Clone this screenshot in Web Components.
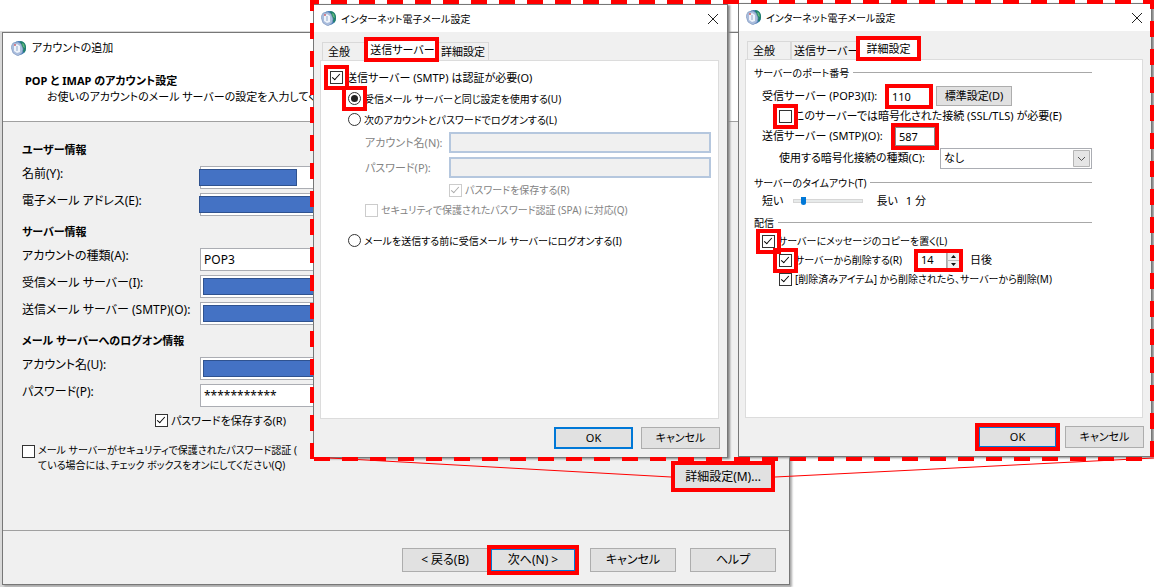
<!DOCTYPE html>
<html lang="ja">
<head>
<meta charset="utf-8">
<title>アカウントの追加</title>
<style>
  body {
    margin: 0;
    min-height: 100vh;
    background: #fff;
    color: #000;
    font: 12px/16px "Noto Sans", "Noto Sans CJK JP", sans-serif;
    font-feature-settings: "palt";
  }
</style>
</head>
<body>
<mail-desktop></mail-desktop>

<script>
class AppIcon extends HTMLElement {
  constructor () {
    super()
    this.attachShadow({ mode: 'open' }).innerHTML = /* html */`
      <style>
        :host { display: block; flex: none; width: 15px; height: 15px; }
        svg { display: block; width: 100%; height: 100%; }
      </style>
      <svg viewBox="0 0 15 15">
        <circle cx="8" cy="7" r="7" fill="#3e78b4"/>
        <path d="M9 0c4 0 6 3 6 7 0 2-1 4-2 5L10 6Z" fill="#1f7f6c"/>
        <path d="M11 2l2 1 1 4-2-1Z" fill="#5fb878"/>
        <path d="M0 6l2-4 5-1 3 2 2 5-1 4-4 3-5-3Z" fill="#a9bcdc" stroke="#7c96be" stroke-width=".6"/>
        <path d="M3 5l3-2 3 2v6l-3 1-3-2Z" fill="#eef3fb"/>
        <path d="M6 5v5" stroke="#91a9c9" fill="none"/>
        <circle cx="4" cy="4" r="1" fill="#d66b72"/>
      </svg>
    `
  }
}

class PushButton extends HTMLElement {
  constructor () {
    super()
    this.attachShadow({ mode: 'open' }).innerHTML = /* html */`
      <style>
        :host { display: block; flex: none; width: 79px; height: 22px; }
        button {
          display: block;
          width: 100%;
          height: 100%;
          padding: 0;
          border: 1px solid #adadad;
          background: #e1e1e1;
          color: inherit;
          font: inherit;
          font-feature-settings: inherit;
          white-space: nowrap;
        }
        :host([primary]) button { border: 2px solid #0078d7; }
        :host([mark]) button { outline: 4px solid #f00; outline-offset: -1px; }
      </style>
      <button type="button"><slot></slot></button>
    `
  }
}

class CheckOption extends HTMLElement {
  constructor () {
    super()
    this.attachShadow({ mode: 'open' })
  }

  connectedCallback () {
    const type = this.getAttribute('type') || 'checkbox'
    this.shadowRoot.innerHTML = /* html */`
      <style>
        :host { display: flex; align-items: center; gap: 3px; white-space: nowrap; }
        :host([multiline]) { align-items: flex-start; }
        :host([multiline]) span { margin-top: 2px; }
        :host([disabled]) { color: #838383; }
        span { position: relative; flex: none; width: 13px; height: 13px; }
        input {
          appearance: none;
          box-sizing: border-box;
          display: block;
          position: relative;
          width: 13px;
          height: 13px;
          margin: 0;
          border: 1px solid #333;
          background: #fff;
        }
        input[type=radio] { border-radius: 50%; }
        input:disabled { border-color: #ccc; color: #aaa; }
        input[type=checkbox]:checked::before {
          content: "";
          position: absolute;
          left: 3px;
          top: 0;
          width: 3px;
          height: 7px;
          border: solid currentColor;
          border-width: 0 1px 1px 0;
          transform: rotate(42deg);
        }
        input[type=radio]:checked::before {
          content: "";
          position: absolute;
          inset: 2px;
          border-radius: 50%;
          background: #222;
        }
        :host([mark]) span { z-index: 1; outline: 4px solid #f00; outline-offset: 2px; }
      </style>
      <span><input id="box" name="option" type="${type}"
        ${this.hasAttribute('checked') ? 'checked' : ''}
        ${this.hasAttribute('disabled') ? 'disabled' : ''}></span>
      <label for="box"><slot></slot></label>
    `
  }
}

/* Label and text box of the account form. "cover" is the bar hiding a private value. */
class FormField extends HTMLElement {
  constructor () {
    super()
    this.attachShadow({ mode: 'open' })
  }

  connectedCallback () {
    const cover = this.getAttribute('cover')
    this.shadowRoot.innerHTML = /* html */`
      <style>
        :host { display: flex; height: 27px; }
        label { flex: none; width: 178px; padding-top: 2px; white-space: nowrap; }
        div { position: relative; flex: 1; padding: 2px 0; }
        input {
          box-sizing: border-box;
          width: 100%;
          height: 23px;
          padding: 0 3px;
          border: 1px solid #abadb3;
          background: #fff;
          font: inherit;
        }
        span {
          position: absolute;
          box-sizing: border-box;
          left: 3px;
          top: 5px;
          right: 0;
          height: 17px;
          border: 1px solid #2f528f;
          background: #4472c4;
        }
        .short { left: -1px; right: auto; width: 98px; }
        .wide { left: -1px; }
      </style>
      <label for="box">${this.getAttribute('label')}</label>
      <div>
        <input id="box" type="text" value="${this.getAttribute('value') || ''}">
        ${cover !== null ? `<span class="${cover}"></span>` : ''}
      </div>
    `
  }
}

class OptionGroup extends HTMLElement {
  constructor () {
    super()
    this.attachShadow({ mode: 'open' })
  }

  connectedCallback () {
    this.shadowRoot.innerHTML = /* html */`
      <style>
        :host { display: block; }
        header { display: flex; align-items: center; gap: 4px; height: 16px; font-size: 10px; white-space: nowrap; }
        header::after { content: ""; flex: 1; height: 1px; margin-bottom: 2px; background: #a8a8a8; }
      </style>
      <header>${this.getAttribute('label')}</header>
      <slot></slot>
    `
  }
}

class SettingsDialog extends HTMLElement {
  constructor () {
    super()
    this.attachShadow({ mode: 'open' })
  }

  connectedCallback () {
    const active = Number(this.getAttribute('active'))
    const tabs = ['全般', '送信サーバー', '詳細設定'].map((name, i) =>
      `<button type="button" role="tab" aria-selected="${i === active}">${name}</button>`).join('')
    this.shadowRoot.innerHTML = /* html */`
      <style>
        :host {
          display: flex;
          flex-direction: column;
          box-sizing: border-box;
          border: 1px solid #777;
          background: #f0f0f0;
          box-shadow: 2px 1px 2px #888;
          font-size: 11px;
        }
        header {
          display: flex;
          align-items: center;
          gap: 5px;
          height: 27px;
          padding: 0 8px 0 7px;
          background: #fff;
        }
        h2 { flex: 1; margin: 0; font: inherit; font-size: 10px; }
        .close { width: 12px; height: 12px; padding: 0; border: 0; background: none; }
        .close svg { display: block; }
        nav { display: flex; align-items: flex-end; height: 28px; padding: 0 8px; }
        nav button {
          height: 18px;
          padding: 0;
          border: 1px solid #d9d9d9;
          border-bottom: 0;
          background: #f0f0f0;
          color: inherit;
          font: inherit;
          font-feature-settings: inherit;
          white-space: nowrap;
        }
        nav button:first-child { width: 44px; padding: 0 5px; text-align: left; }
        nav button:nth-child(2) { width: 67px; padding-left: 2px; }
        nav button:nth-child(3) { width: 52px; }
        nav button[aria-selected=true] {
          position: relative;
          z-index: 1;
          height: 21px;
          border: 0;
          background: #fff;
          outline: 4px solid #f00;
          outline-offset: -2px;
        }
        nav button:nth-child(2)[aria-selected=true] { width: 71px; }
        nav button:nth-child(3)[aria-selected=true] { width: 61px; }
        main { flex: 1; margin: 0 8px 0 6px; border: 1px solid #dcdcdc; background: #fff; }
        footer { display: flex; justify-content: flex-end; gap: 8px; padding: 8px 7px 8px 6px; }
      </style>
      <header>
        <app-icon></app-icon>
        <h2>インターネット電子メール設定</h2>
        <button class="close" type="button" aria-label="閉じる">
          <svg width="12" height="12" viewBox="0 0 12 12"><path d="M1 1l10 10M11 1L1 11" stroke="#222" fill="none"/></svg>
        </button>
      </header>
      <nav role="tablist">${tabs}</nav>
      <main><slot></slot></main>
      <footer>
        <push-button primary ${this.hasAttribute('mark-ok') ? 'mark' : ''}>OK</push-button>
        <push-button>キャンセル</push-button>
      </footer>
    `
  }
}

class OutgoingSettings extends HTMLElement {
  constructor () {
    super()
    this.attachShadow({ mode: 'open' }).innerHTML = /* html */`
      <style>
        :host { display: flex; flex-direction: column; padding: 6px 7px 0 9px; }
        check-option { height: 21px; }
        .level1 { padding-left: 18px; }
        .field { display: flex; align-items: center; height: 25px; padding-left: 35px; color: #838383; }
        .field label { width: 84px; }
        .field input {
          box-sizing: border-box;
          flex: 1;
          height: 21px;
          border: 2px solid #b5c7de;
          background: #f0f0f0;
        }
        .small { font-size: 10px; }
        .save { height: 20px; padding-left: 119px; }
        .secure { height: 20px; padding-left: 35px; }
        .before { margin-top: 10px; }
      </style>
      <check-option checked mark>送信サーバー (SMTP) は認証が必要(O)</check-option>
      <check-option class="level1 small" type="radio" checked mark>受信メール サーバーと同じ設定を使用する(U)</check-option>
      <check-option class="level1 small" type="radio">次のアカウントとパスワードでログオンする(L)</check-option>
      <div class="field"><label for="user">アカウント名(N):</label><input id="user" type="text" disabled></div>
      <div class="field"><label for="pass">パスワード(P):</label><input id="pass" type="password" disabled></div>
      <check-option class="save small" checked disabled>パスワードを保存する(R)</check-option>
      <check-option class="secure small" disabled>セキュリティで保護されたパスワード認証 (SPA) に対応(Q)</check-option>
      <check-option class="level1 before small" type="radio">メールを送信する前に受信メール サーバーにログオンする(I)</check-option>
    `
  }
}

class AdvancedSettings extends HTMLElement {
  constructor () {
    super()
    this.attachShadow({ mode: 'open' }).innerHTML = /* html */`
      <style>
        :host { display: block; padding: 5px 50px 0 8px; }
        .row { display: flex; align-items: center; height: 20px; padding-left: 8px; white-space: nowrap; }
        .indent { padding-left: 25px; }
        .ports { padding-top: 5px; }
        .type { height: 24px; }
        .remove { height: 18px; }
        .small { font-size: 10px; }
        input, select { box-sizing: border-box; font: inherit; font-feature-settings: inherit; color: inherit; }
        .port { height: 19px; padding: 0 3px; border: 1px solid #888; background: #fff; outline: 4px solid #f00; }
        .pop { width: 42px; outline-offset: -1px; }
        .smtp { width: 40px; }
        .pop-label { width: 126px; }
        .smtp-label { width: 133px; }
        .type label { width: 161px; }
        .select { position: relative; flex: 1; }
        select {
          appearance: none;
          width: 100%;
          height: 21px;
          padding: 0 3px;
          border: 1px solid #abadb3;
          border-radius: 0;
          background: #fff;
        }
        .select svg { position: absolute; right: 2px; top: 2px; pointer-events: none; }
        push-button { width: 76px; height: 20px; margin-left: 6px; }
        input[type=range] { appearance: none; width: 70px; height: 16px; margin: 0 13px 0 10px; background: none; }
        input[type=range]::-webkit-slider-runnable-track {
          box-sizing: border-box;
          height: 4px;
          border: 1px solid #d6d6d6;
          background: #e7eaea;
        }
        input[type=range]::-webkit-slider-thumb {
          appearance: none;
          width: 5px;
          height: 8px;
          margin-top: -3px;
          border-radius: 0 0 3px 3px;
          background: #0078d7;
        }
        output { margin-left: 8px; }
        .timeout { margin-top: 5px; }
        .delivery { margin-top: 4px; }
        .days {
          display: flex;
          width: 43px;
          height: 17px;
          margin: 0 10px 0 15px;
          outline: 4px solid #f00;
          outline-offset: -1px;
        }
        .days input { flex: 1; min-width: 0; padding: 0 3px; border: 1px solid #aaa; background: #fff; appearance: textfield; }
        .days input::-webkit-inner-spin-button { display: none; }
        .days svg { flex: none; }
      </style>
      <option-group label="サーバーのポート番号">
        <div class="ports">
          <div class="row">
            <label class="pop-label" for="pop">受信サーバー (POP3)(I):</label>
            <input class="port pop" id="pop" type="text" value="110">
            <push-button>標準設定(D)</push-button>
          </div>
          <div class="row indent">
            <check-option mark>このサーバーでは暗号化された接続 (SSL/TLS) が必要(E)</check-option>
          </div>
          <div class="row">
            <label class="smtp-label" for="smtp">送信サーバー (SMTP)(O):</label>
            <input class="port smtp" id="smtp" type="text" value="587">
          </div>
          <div class="row indent type">
            <label for="crypt">使用する暗号化接続の種類(C):</label>
            <div class="select">
              <select id="crypt"><option>なし</option></select>
              <svg width="17" height="17" viewBox="0 0 17 17">
                <path d="M.5.5h16v16H.5Z" fill="#e5e5e5" stroke="#b5b5b5"/>
                <path d="M5 7l3.500 3.500L12 7" fill="none" stroke="#555"/>
              </svg>
            </div>
          </div>
        </div>
      </option-group>
      <option-group class="timeout" label="サーバーのタイムアウト(T)">
        <div class="row">
          <label for="wait">短い</label>
          <input id="wait" type="range" min="1" max="10" value="2">
          <span>長い</span>
          <output for="wait">1 分</output>
        </div>
      </option-group>
      <option-group class="delivery" label="配信">
        <div class="row small"><check-option checked mark>サーバーにメッセージのコピーを置く(L)</check-option></div>
        <div class="row indent remove">
          <check-option class="small" checked mark>サーバーから削除する(R)</check-option>
          <div class="days">
            <input id="days" type="number" value="14" aria-label="日後">
            <svg width="13" height="17" viewBox="0 0 13 17">
              <path d="M.5.5h12v8H.5ZM.5 8.500h12v8H.5Z" fill="#f0f0f0" stroke="#bbb"/>
              <path d="M4 6l2.500-3L9 6ZM4 11l2.500 3L9 11Z" fill="#111"/>
            </svg>
          </div>
          <label for="days">日後</label>
        </div>
        <div class="row indent small"><check-option checked>[削除済みアイテム] から削除されたら、サーバーから削除(M)</check-option></div>
      </option-group>
    `
  }
}

class AccountWizard extends HTMLElement {
  constructor () {
    super()
    this.attachShadow({ mode: 'open' }).innerHTML = /* html */`
      <style>
        :host {
          display: flex;
          flex-direction: column;
          box-sizing: border-box;
          border: 1px solid #777;
          background: #f0f0f0;
          box-shadow: 2px 2px 2px #aaa;
        }
        header { height: 88px; border-bottom: 1px solid #a0a0a0; background: #fff; }
        .title { display: flex; align-items: center; gap: 6px; height: 30px; padding-left: 8px; }
        h1, h2, h3, p { margin: 0; font-size: 11px; line-height: 16px; white-space: nowrap; }
        h1 { font-weight: normal; }
        .intro { padding: 10px 0 0 22px; }
        .intro p { padding-left: 22px; }
        form { flex: 1; padding: 14px 17px 0 19px; }
        h3 { height: 28px; padding-top: 6px; box-sizing: border-box; }
        form-field { width: 390px; }
        .save { height: 23px; padding-left: 133px; font-size: 11px; }
        .last { display: flex; justify-content: space-between; align-items: flex-start; }
        .spa { padding-top: 11px; font-size: 10px; line-height: 15px; }
        .last push-button { width: 98px; height: 25px; margin-top: 32px; }
        footer {
          display: flex;
          justify-content: flex-end;
          height: 54px;
          padding: 17px 13px 0;
          box-sizing: border-box;
          border-top: 1px solid #a0a0a0;
        }
        footer push-button { width: 86px; height: 24px; }
        footer push-button + push-button { margin-left: 14px; }
        footer push-button[primary] { margin-left: 2px; }
      </style>
      <header>
        <div class="title"><app-icon></app-icon><h1>アカウントの追加</h1></div>
        <div class="intro">
          <h2>POP と IMAP のアカウント設定</h2>
          <p>お使いのアカウントのメール サーバーの設定を入力してください。</p>
        </div>
      </header>
      <form>
        <h3>ユーザー情報</h3>
        <form-field label="名前(Y):" cover="short"></form-field>
        <form-field label="電子メール アドレス(E):" cover="wide"></form-field>
        <h3>サーバー情報</h3>
        <form-field label="アカウントの種類(A):" value="POP3"></form-field>
        <form-field label="受信メール サーバー(I):" cover=""></form-field>
        <form-field label="送信メール サーバー (SMTP)(O):" cover=""></form-field>
        <h3>メール サーバーへのログオン情報</h3>
        <form-field label="アカウント名(U):" cover=""></form-field>
        <form-field label="パスワード(P):" value="***********"></form-field>
        <check-option class="save" checked>パスワードを保存する(R)</check-option>
        <div class="last">
          <check-option class="spa" multiline>メール サーバーがセキュリティで保護されたパスワード認証 (<br>ている場合には、チェック ボックスをオンにしてください(Q)</check-option>
          <push-button mark>詳細設定(M)...</push-button>
        </div>
      </form>
      <footer>
        <push-button>&lt; 戻る(B)</push-button>
        <push-button primary mark>次へ(N) &gt;</push-button>
        <push-button>キャンセル</push-button>
        <push-button>ヘルプ</push-button>
      </footer>
    `
  }
}

/* Desktop canvas: three windows and the red callout around the two dialogs. */
class MailDesktop extends HTMLElement {
  constructor () {
    super()
    this.attachShadow({ mode: 'open' }).innerHTML = /* html */`
      <style>
        :host { display: block; position: relative; height: 100vh; min-height: 587px; overflow: hidden; }
        account-wizard, settings-dialog, .behind, .callout { position: absolute; }
        .behind { left: 0; top: 31px; width: 791px; height: 556px; background: #d9d9d9; }
        account-wizard { left: 2px; top: 32px; width: 788px; height: 553px; }
        .outgoing { left: 313px; top: 4px; width: 415px; height: 454px; }
        .advanced { left: 738px; top: 3px; width: 414px; height: 454px; }
        .callout { left: 0; top: 0; pointer-events: none; }
      </style>
      <div class="behind"></div>
      <account-wizard></account-wizard>
      <settings-dialog class="outgoing" active="1"><outgoing-settings></outgoing-settings></settings-dialog>
      <settings-dialog class="advanced" active="2" mark-ok><advanced-settings></advanced-settings></settings-dialog>
      <svg class="callout" width="1154" height="587" viewBox="0 0 1154 587" fill="none" stroke="#f00">
        <path d="M330 458L671 477M775 477L1154 458"/>
        <g stroke-width="4" stroke-dasharray="16 12">
          <path d="M310 2H1154" stroke-dashoffset="7"/>
          <path d="M312 0V461" stroke-dashoffset="5"/>
          <path d="M314 459H1154"/>
          <path d="M1152 0V461" stroke-dashoffset="7"/>
        </g>
      </svg>
    `
  }
}

customElements.define('app-icon', AppIcon)
customElements.define('push-button', PushButton)
customElements.define('check-option', CheckOption)
customElements.define('form-field', FormField)
customElements.define('option-group', OptionGroup)
customElements.define('settings-dialog', SettingsDialog)
customElements.define('outgoing-settings', OutgoingSettings)
customElements.define('advanced-settings', AdvancedSettings)
customElements.define('account-wizard', AccountWizard)
customElements.define('mail-desktop', MailDesktop)
</script>
</body>
</html>
